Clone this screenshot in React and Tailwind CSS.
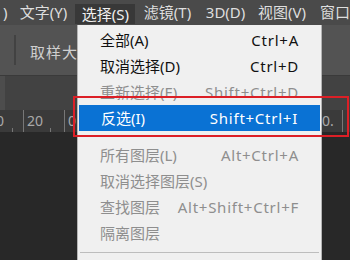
import React from "react";

const font = { fontFamily: '"Noto Sans", "Noto Sans CJK SC", sans-serif' };

const items = [
  { label: "全部(A)", sc: "Ctrl+A", on: true },
  { label: "取消选择(D)", sc: "Ctrl+D", on: true },
  { label: "重新选择(E)", sc: "Shift+Ctrl+D", on: false },
  { label: "反选(I)", sc: "Shift+Ctrl+I", on: true, hi: true },
  { sep: true },
  { label: "所有图层(L)", sc: "Alt+Ctrl+A", on: false },
  { label: "取消选择图层(S)", sc: "", on: false },
  { label: "查找图层", sc: "Alt+Shift+Ctrl+F", on: false },
  { label: "隔离图层", sc: "", on: false },
  { sep2: true },
];

export default function App() {
  return (
    <div
      className="relative w-[350px] h-[260px] overflow-hidden bg-[#282828] text-[15px]"
      style={font}
    >
      {/* menu bar */}
      <div className="flex h-[25px] items-center bg-[#4a4a4a] text-[#dedede] leading-none">
        <div className="w-[13px] pl-[3px]">)</div>
        <div className="w-[63px] pl-[7px]">文字(Y)</div>
        <div className="w-[61px] h-[20px] mt-[3px] pl-[7px] flex items-center bg-[#383838] text-[#f0f0f0]">选择(S)</div>
        <div className="w-[2px]" />
        <div className="w-[63px] pl-[7px]">滤镜(T)</div>
        <div className="w-[53px] pl-[7px]">3D(D)</div>
        <div className="w-[63px] pl-[7px]">视图(V)</div>
        <div className="pl-[7px] whitespace-nowrap">窗口</div>
      </div>
      {/* options bar */}
      <div className="flex h-[50px] items-center bg-[#535353]">
        <div className="ml-[14px] w-[2px] h-[30px] bg-[#424242]" />
        <div className="ml-[14px] text-[#cfcfcf] tracking-[1px] mt-[4px]">取样大小</div>
      </div>
      {/* tab strip */}
      <div className="flex h-[35px] bg-[#424242] border-t border-[#3a3a3a]">
        <div className="w-[5px] bg-[#4d4d4d]" />
      </div>
      {/* ruler */}
      <div className="relative h-[22px] bg-[#3a3a3a] text-[#a9a9a9] text-[14px] leading-none">
        <div className="flex h-full items-end">
          <div className="w-[23px] flex items-end h-full">
            <span className="ml-[-4px] mb-[4px]">0</span>
            <div className="ml-[8px] w-px h-[4px] bg-[#777]" />
          </div>
          <div className="w-px h-full bg-[#777]" />
          <span className="ml-[3px] mb-[4px]">20</span>
          <div className="ml-[7px] w-px h-[4px] bg-[#777]" />
          <div className="ml-[13px] w-px h-full bg-[#777]" />
          <span className="ml-[3px] mb-[4px]">0</span>
          <div className="ml-[246px] mb-[4px]">0.</div>
          <div className="ml-[8px] w-px h-full bg-[#777]" />
        </div>
      </div>

      {/* dropdown menu */}
      <div className="absolute left-[77px] top-[25px] w-[245px] h-[240px] bg-[#f0f0f0] border-x border-[#b4b4b4] pt-[2px]">
        {items.map((it, i) =>
          it.sep ? (
            <div key={i} className="h-[11px] flex items-center px-[2px]">
              <div className="h-px w-full bg-[#cfcfcf]" />
            </div>
          ) : it.sep2 ? (
            <div key={i} className="h-[13px] flex items-center px-[2px]">
              <div className="h-px w-full bg-[#bdbdbd]" />
            </div>
          ) : (
            <div
              key={i}
              className={
                "h-[26px] flex items-center justify-between pl-[22px] pr-[22px] whitespace-nowrap " +
                (it.hi
                  ? "bg-[#0a72d4] text-white mx-px"
                  : it.on
                  ? "text-[#111]"
                  : "text-[#8e8e8e]")
              }
            >
              <span>{it.label}</span>
              <span className="tracking-[0.75px]">{it.sc}</span>
            </div>
          )
        )}
      </div>

      {/* red annotation box */}
      <div className="absolute left-[73px] top-[96px] w-[276px] h-[41px] border-2 border-[#dc1f26]" />
    </div>
  );
}
